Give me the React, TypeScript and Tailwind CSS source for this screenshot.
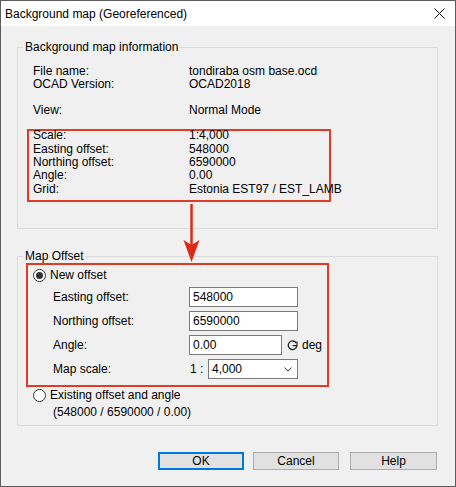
import React from "react";

function InfoRow({ label, value }: { label: string; value: string }) {
  return (
    <div className="flex h-[13.4px] leading-[13.4px]">
      <div className="w-[156px] shrink-0">{label}</div>
      <div className="whitespace-nowrap">{value}</div>
    </div>
  );
}

function Radio({ checked }: { checked?: boolean }) {
  return (
    <div className="w-[13px] h-[13px] rounded-full border border-[#333333] bg-white flex items-center justify-center shrink-0">
      {checked && <div className="w-[7px] h-[7px] rounded-full bg-[#333333]" />}
    </div>
  );
}

function Field({ label, value, width }: { label: string; value: string; width: string }) {
  return (
    <div className="flex items-center h-[20px] pl-[25px]">
      <div className="w-[136px] shrink-0">{label}</div>
      <div className={`${width} h-[20px] border border-[#7a7a7a] bg-white pl-[3px] leading-[18px]`}>{value}</div>
    </div>
  );
}

export default function App() {
  return (
    <div className="relative w-[456px] h-[487px] bg-[#f0f0f0] border border-[#5c5c5c] flex flex-col font-['Liberation_Sans',Arial,sans-serif] text-[12px] text-black overflow-hidden">
      {/* Title bar */}
      <div className="h-[25px] bg-white flex items-center justify-between shrink-0">
        <div className="pl-[4px] leading-[16px]">Background map (Georeferenced)</div>
        <svg width="11" height="11" viewBox="0 0 11 11" className="mr-[10px]">
          <path d="M0.5 0.5 L10.5 10.5 M10.5 0.5 L0.5 10.5" stroke="#111" strokeWidth="1" />
        </svg>
      </div>

      {/* Group 1 */}
      <div className="ml-[16px] mt-[21px] w-[421px] h-[182px] border border-[#dcdcdc] flex flex-col shrink-0">
        <div className="-mt-[9px] ml-[5px] px-[2px] w-fit bg-[#f0f0f0] h-[16px] leading-[16px]">
          Background map information
        </div>
        <div className="mt-[10px] pl-[15px]">
          <InfoRow label="File name:" value="tondiraba osm base.ocd" />
          <InfoRow label="OCAD Version:" value="OCAD2018" />
          <div className="mt-[12px]">
            <InfoRow label="View:" value="Normal Mode" />
          </div>
        </div>
        <div className="ml-[9px] mt-[12px] w-[304px] h-[73px] border-2 border-[#e23b25] pl-[4px]">
          <div className="-mt-[2px]">
            <InfoRow label="Scale:" value="1:4,000" />
            <InfoRow label="Easting offset:" value="548000" />
            <InfoRow label="Northing offset:" value="6590000" />
            <InfoRow label="Angle:" value="0.00" />
            <InfoRow label="Grid:" value="Estonia EST97 / EST_LAMB" />
          </div>
        </div>
      </div>

      {/* Group 2 */}
      <div className="ml-[16px] mt-[27px] w-[421px] h-[170px] border border-[#dcdcdc] flex flex-col shrink-0">
        <div className="-mt-[9px] ml-[5px] px-[2px] w-fit bg-[#f0f0f0] h-[16px] leading-[16px]">Map Offset</div>
        <div className="-mt-[1px] ml-[8px] w-[303px] h-[124px] border-2 border-[#e23b25] flex flex-col">
          <div className="mt-[2px] h-[16px] flex items-center pl-[5px]">
            <Radio checked />
            <span className="ml-[4px] leading-[16px]">New offset</span>
          </div>
          <div className="mt-[4px] flex flex-col gap-[4px]">
            <Field label="Easting offset:" value="548000" width="w-[109px]" />
            <Field label="Northing offset:" value="6590000" width="w-[109px]" />
            <div className="flex items-center h-[20px] pl-[25px]">
              <div className="w-[136px] shrink-0">Angle:</div>
              <div className="w-[93px] h-[20px] border border-[#7a7a7a] bg-white pl-[3px] leading-[18px]">0.00</div>
              <svg width="11" height="11" viewBox="0 0 11 11" className="ml-[5px]">
                <path d="M9.3 3.2 A4.3 4.3 0 1 0 9.8 5.8" fill="none" stroke="#222" strokeWidth="1.3" />
                <path d="M5.6 5.6 L10 5.6 L10 1.6" fill="none" stroke="#222" strokeWidth="1.2" />
              </svg>
              <span className="ml-[4px]">deg</span>
            </div>
            <div className="flex items-center h-[20px] pl-[25px]">
              <div className="w-[137px] shrink-0">Map scale:</div>
              <div className="w-[18px] shrink-0">1 :</div>
              <div className="w-[90px] h-[20px] border border-[#7a7a7a] bg-white pl-[3px] leading-[18px] flex items-center justify-between pr-[5px]">
                <span>4,000</span>
                <svg width="8" height="5" viewBox="0 0 8 5">
                  <path d="M0.5 0.5 L4 4 L7.5 0.5" fill="none" stroke="#444" strokeWidth="1" />
                </svg>
              </div>
            </div>
          </div>
        </div>
        <div className="h-[16px] flex items-center pl-[15px]">
          <Radio />
          <span className="ml-[4px] leading-[16px]">Existing offset and angle</span>
        </div>
        <div className="mt-[1px] pl-[35px] h-[16px] leading-[16px]">(548000 / 6590000 / 0.00)</div>
      </div>

      {/* Buttons */}
      <div className="mt-[26px] flex shrink-0">
        <div className="ml-[157px] w-[86px] h-[18px] border-2 border-[#0078d7] bg-[#e1e1e1] flex items-center justify-center">OK</div>
        <div className="ml-[9px] w-[86px] h-[18px] border border-[#adadad] bg-[#e1e1e1] flex items-center justify-center">Cancel</div>
        <div className="ml-[11px] w-[87px] h-[18px] border border-[#adadad] bg-[#e1e1e1] flex items-center justify-center">Help</div>
      </div>

      {/* Annotation arrow */}
      <svg className="absolute left-[182px] top-[203px]" width="18" height="60" viewBox="0 0 18 60">
        <path d="M8.5 0 L8.5 42" stroke="#dc2a14" strokeWidth="2.5" />
        <path d="M0.5 36 L8.5 41 L16.5 36 L8.5 58 Z" fill="#dc2a14" />
      </svg>
    </div>
  );
}
